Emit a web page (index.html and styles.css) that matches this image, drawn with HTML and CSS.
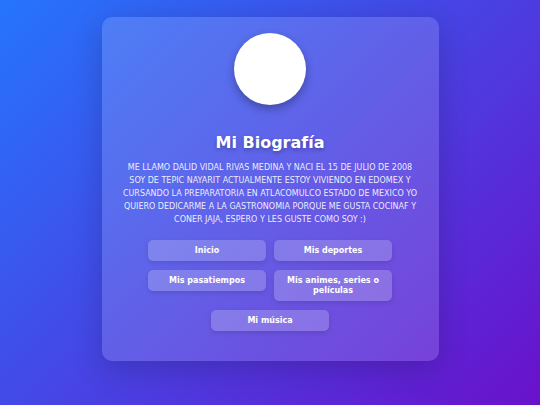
FILE: index.html
```html
<!DOCTYPE html>
<html lang="es">
<head>
<meta charset="utf-8">
<title>Mi Biografía</title>
<link rel="stylesheet" href="styles.css">
</head>
<body>
<main class="card">
  <div class="avatar"></div>
  <h1 class="title">Mi Biografía</h1>
  <p class="bio">ME LLAMO DALID VIDAL RIVAS MEDINA Y NACI EL 15 DE JULIO DE 2008 SOY DE TEPIC NAYARIT ACTUALMENTE ESTOY VIVIENDO EN EDOMEX Y CURSANDO LA PREPARATORIA EN ATLACOMULCO ESTADO DE MEXICO YO QUIERO DEDICARME A LA GASTRONOMIA PORQUE ME GUSTA COCINAF Y CONER JAJA, ESPERO Y LES GUSTE COMO SOY :)</p>
  <nav class="menu">
    <a class="btn" href="#">Inicio</a>
    <a class="btn" href="#">Mis deportes</a>
    <a class="btn" href="#">Mis pasatiempos</a>
    <a class="btn" href="#">Mis animes, series o películas</a>
    <a class="btn" href="#">Mi música</a>
  </nav>
</main>
</body>
</html>
```

FILE: styles.css
```css
html, body {
  margin: 0;
  height: 100%;
}
body {
  background: linear-gradient(135deg, #2575fc 0%, #6a11cb 100%);
  font-family: "DejaVu Sans", Verdana, sans-serif;
  color: #fff;
  display: flex;
  justify-content: center;
  align-items: flex-start;
  padding-top: 17px;
  box-sizing: border-box;
  overflow: hidden;
}
.card {
  width: 337px;
  height: 344px;
  box-sizing: border-box;
  background: rgba(255, 255, 255, 0.15);
  border-radius: 10px;
  box-shadow: 0 8px 30px rgba(0, 0, 0, 0.18);
  padding: 16px 20px 0;
  display: flex;
  flex-direction: column;
  align-items: center;
}
.avatar {
  width: 72px;
  height: 72px;
  border-radius: 50%;
  background: #fff;
  box-shadow: 0 4px 10px rgba(0, 0, 0, 0.3);
}
.title {
  margin: 28px 0 0;
  font-size: 16px;
  line-height: 20px;
  font-weight: bold;
  text-shadow: 0 2px 4px rgba(0, 0, 0, 0.3);
}
.bio {
  margin: 8px 0 0;
  font-size: 8px;
  line-height: 13px;
  text-align: center;
  color: rgba(255, 255, 255, 0.9);
}
.menu {
  margin-top: 14px;
  width: 244px;
  display: flex;
  flex-wrap: wrap;
  justify-content: center;
  align-items: flex-start;
  gap: 9px 8px;
}
.btn {
  width: 118px;
  box-sizing: border-box;
  padding: 5.5px 10px;
  background: rgba(255, 255, 255, 0.2);
  border-radius: 5px;
  box-shadow: 0 2px 5px rgba(0, 0, 0, 0.12);
  color: #fff;
  text-decoration: none;
  font-size: 8px;
  line-height: 10px;
  font-weight: bold;
  text-align: center;
}
```
